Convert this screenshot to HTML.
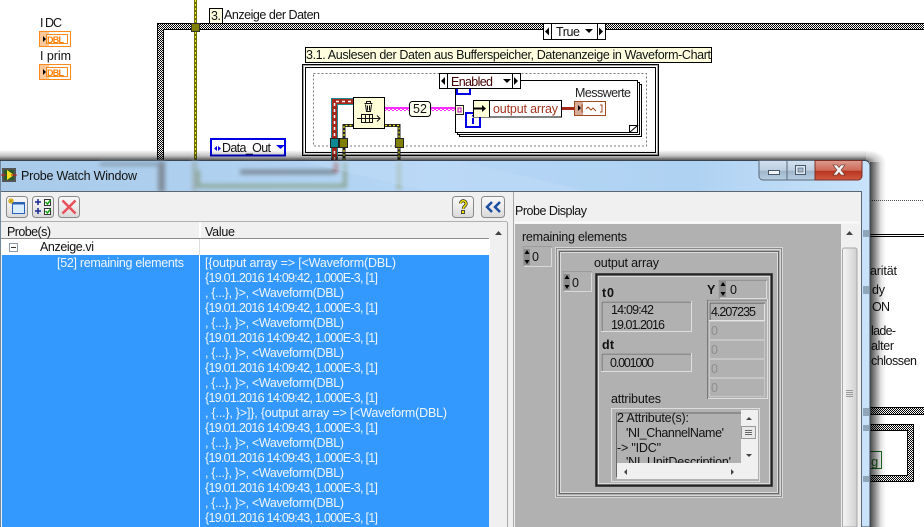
<!DOCTYPE html>
<html><head><meta charset="utf-8"><style>
html,body{margin:0;padding:0;background:#fff;width:924px;height:527px;overflow:hidden}
svg{display:block}
text{font-family:"Liberation Sans",sans-serif;font-size:12.5px;fill:#111}
.w text{fill:#f0f6ff}
</style></head><body>
<svg width="924" height="527" viewBox="0 0 924 527" xmlns="http://www.w3.org/2000/svg">
<defs>
<pattern id="n" width="2" height="2" patternUnits="userSpaceOnUse"><rect width="2" height="2" fill="#fff"/><rect width="1" height="1" fill="#000"/><rect x="1" y="1" width="1" height="1" fill="#000"/></pattern>
<pattern id="bw" width="5" height="6" patternUnits="userSpaceOnUse"><rect width="5" height="6" fill="#a5281a"/><rect y="2" width="5" height="2" fill="#fff"/></pattern>
<pattern id="ph" width="4" height="4" patternUnits="userSpaceOnUse"><rect width="4" height="4" fill="#ff30ff"/><rect x="0" y="1" width="2" height="1" fill="#fff"/><rect x="2" y="2" width="2" height="1" fill="#fff"/></pattern>
<filter id="b" x="-20%" y="-100%" width="140%" height="300%"><feGaussianBlur stdDeviation="2.2"/></filter>
<linearGradient id="btn" x1="0" y1="0" x2="0" y2="1"><stop offset="0" stop-color="#f8f8f8"/><stop offset=".5" stop-color="#ececec"/><stop offset="1" stop-color="#d8d8d8"/></linearGradient>
<linearGradient id="glass" x1="0" y1="0" x2="1" y2="0"><stop offset="0" stop-color="#a9cbe9"/><stop offset=".5" stop-color="#b5d6f5"/><stop offset=".8" stop-color="#b0d2f2"/><stop offset="1" stop-color="#c8e3fa"/></linearGradient>
<linearGradient id="cl" x1="0" y1="0" x2="0" y2="1"><stop offset="0" stop-color="#dc9c90"/><stop offset=".5" stop-color="#cf6a58"/><stop offset=".55" stop-color="#b83420"/><stop offset="1" stop-color="#d05a40"/></linearGradient>
<linearGradient id="mn" x1="0" y1="0" x2="0" y2="1"><stop offset="0" stop-color="#d4e2ef"/><stop offset=".5" stop-color="#bccfe0"/><stop offset=".55" stop-color="#a0b6ca"/><stop offset="1" stop-color="#b8cfe3"/></linearGradient>
<linearGradient id="sb" x1="0" y1="0" x2="1" y2="0"><stop offset="0" stop-color="#f4f4f4"/><stop offset=".5" stop-color="#e4e4e4"/><stop offset="1" stop-color="#cfcfcf"/></linearGradient>
<linearGradient id="shR" x1="0" y1="0" x2="1" y2="0"><stop offset="0" stop-color="#000" stop-opacity=".72"/><stop offset=".35" stop-color="#000" stop-opacity=".42"/><stop offset=".7" stop-color="#000" stop-opacity=".1"/><stop offset="1" stop-color="#000" stop-opacity="0"/></linearGradient>
<linearGradient id="shT" x1="0" y1="1" x2="0" y2="0"><stop offset="0" stop-color="#000" stop-opacity=".65"/><stop offset=".4" stop-color="#000" stop-opacity=".25"/><stop offset="1" stop-color="#000" stop-opacity="0"/></linearGradient>
<radialGradient id="shC" cx="0" cy="1" r="1"><stop offset="0" stop-color="#000" stop-opacity=".6"/><stop offset=".5" stop-color="#000" stop-opacity=".2"/><stop offset="1" stop-color="#000" stop-opacity="0"/></radialGradient>
</defs>

<!-- ===== diagram ===== -->
<text x="40" y="27" textLength="22">I DC</text>
<text x="40" y="60" textLength="31">I prim</text>
<g><rect x="39.500" y="31.500" width="31" height="15" fill="#fff" stroke="#ff8a1c"/><rect x="40" y="32" width="9" height="14" fill="#ffc89a"/><rect x="46.500" y="34.500" width="21" height="9" fill="#fff" stroke="#ff8a1c"/><path d="M43 36l3 3-3 3z" fill="#000"/><text x="47" y="43" style="font-size:9px;font-weight:bold;fill:#ff7d00" textLength="17">DBL</text></g>
<g transform="translate(0,33)"><rect x="39.500" y="31.500" width="31" height="15" fill="#fff" stroke="#ff8a1c"/><rect x="40" y="32" width="9" height="14" fill="#ffc89a"/><rect x="46.500" y="34.500" width="21" height="9" fill="#fff" stroke="#ff8a1c"/><path d="M43 36l3 3-3 3z" fill="#000"/><text x="47" y="43" style="font-size:9px;font-weight:bold;fill:#ff7d00" textLength="17">DBL</text></g>

<!-- case structure -->
<rect x="157" y="23" width="767" height="6" fill="url(#n)"/>
<rect x="157" y="23" width="6" height="137" fill="url(#n)"/>
<path d="M924 23.500H157.500V160M163.500 160V29.500H924" fill="none" stroke="#000"/>
<rect x="194" y="0" width="3" height="160" fill="#6e6e00"/>
<path d="M195.500 0V160" stroke="#f4f420" stroke-dasharray="2 2"/>
<rect x="191.500" y="23.500" width="8" height="8" fill="#808000" stroke="#333"/>
<rect x="209.500" y="8.500" width="13" height="15" fill="#ffffe0" stroke="#000"/>
<text x="211" y="20" textLength="10">3.</text>
<text x="224" y="19" textLength="96">Anzeige der Daten</text>

<rect x="543.500" y="23.500" width="62" height="16" fill="#fff" stroke="#000"/>
<path d="M551.500 24v15M597.500 24v15" stroke="#000"/>
<path d="M549 27.500l-4 4 4 4zM599 27.500l4 4-4 4z" fill="#000"/>
<text x="556" y="36" textLength="24">True</text>
<path d="M585 29h8l-4 4z" fill="#000"/>

<rect x="305.500" y="47.500" width="406" height="15" fill="#ffffe0" stroke="#000"/>
<text x="306" y="59" textLength="405">3.1. Auslesen der Daten aus Bufferspeicher, Datenanzeige in Waveform-Chart</text>

<!-- sequence frame -->
<rect x="302.500" y="64.500" width="356" height="91" fill="#fff" stroke="#000"/>
<rect x="303.500" y="65.500" width="354" height="89" fill="none" stroke="#aaa"/>
<rect x="305.500" y="67.500" width="350" height="85" fill="#fff" stroke="#000"/>
<rect x="313.500" y="73.500" width="333" height="72.500" fill="none" stroke="#777" stroke-dasharray="2 2"/>

<!-- wires -->
<path d="M331.500 160V98.500H353" fill="none" stroke="#1a8c94"/>
<path d="M337.500 160V104.500H353" fill="none" stroke="#1a8c94"/>
<path d="M334.500 160V101.500H353" fill="none" stroke="#a5281a" stroke-width="5"/>
<path d="M334.500 160V101.500H353" fill="none" stroke="#fff" stroke-width="1.500" stroke-dasharray="3 3"/>
<path d="M344 160V125.500H353M385 125.500H399V160" fill="none" stroke="#222" stroke-width="3"/>
<path d="M344 160V125.500H353M385 125.500H399V160" fill="none" stroke="#eaea20" stroke-width="1.200" stroke-dasharray="2 2"/>
<rect x="330.500" y="138.500" width="8" height="9" fill="#0a8a90" stroke="#222"/>
<rect x="339.500" y="138.500" width="8" height="9" fill="#808000" stroke="#222"/>
<rect x="395.500" y="138.500" width="8" height="9" fill="#808000" stroke="#222"/>
<rect x="385" y="107" width="24" height="4" fill="url(#ph)"/>
<rect x="431" y="107" width="24" height="4" fill="url(#ph)"/>
<rect x="464" y="107" width="10" height="4" fill="url(#ph)"/>

<!-- node -->
<rect x="353.500" y="97.500" width="31" height="31" fill="#ffffd8" stroke="#000"/>
<path d="M364.500 103.500h8M366.500 103.500v-2h4v2M365.500 104.500l1 7h4l1-7M367.500 105.500v5M369.500 105.500v5" fill="none" stroke="#111"/>
<path d="M357 118.500h4.500M361.500 114.500h11v8h-11zM365.500 114.500v8M369.500 114.500v8M361.500 118.500h11M372.500 118.500h7.500M377 115.500l3 3-3 3" fill="none" stroke="#111"/>
<rect x="409.500" y="101.500" width="21" height="15" rx="3" fill="#fffff0" stroke="#000"/>
<text x="413" y="113" textLength="14">52</text>

<!-- disable structure -->
<rect x="459.500" y="84.500" width="182" height="52" fill="#fff" stroke="#000"/>
<rect x="457.500" y="82.500" width="182" height="52" fill="#fff" stroke="#000"/>
<rect x="455.500" y="80.500" width="182" height="52" fill="#fff" stroke="#000"/>
<path d="M629.500 132.500V125.500H637.500L629.500 132.500" fill="#fff" stroke="#000"/>
<rect x="439.500" y="73.500" width="81" height="15" fill="#fff" stroke="#000"/>
<path d="M447.500 74v15M512.500 74v15" stroke="#000"/>
<path d="M445 77l-4 4 4 4zM514 77l4 4-4 4z" fill="#000"/>
<text x="451" y="86" textLength="42" style="fill:#400">Enabled</text>
<path d="M503 79h8l-4 4z" fill="#000"/>
<path d="M457 89v5h13v-5" fill="none" stroke="#0000e6" stroke-width="2"/>
<rect x="455.500" y="105.500" width="8" height="9" fill="#ffffd8" stroke="#222"/>
<rect x="458" y="108" width="3" height="4" fill="none" stroke="#c000c0"/>
<rect x="466" y="113" width="14" height="14" fill="#fff" stroke="#0000e6" stroke-width="2"/>
<rect x="472" y="118" width="2" height="6" fill="#0000e6"/><rect x="472" y="115" width="2" height="1.500" fill="#0000e6"/>
<rect x="473.500" y="100.500" width="88" height="16.500" fill="#fff" stroke="#000"/>
<rect x="474" y="101" width="15" height="16" fill="#ffffd8"/>
<path d="M489.500 100v17" stroke="#000"/>
<path d="M474 108.500h10" stroke="#000" stroke-width="2"/><path d="M482 105l4 3.500-4 3.500z" fill="#000"/>
<text x="493" y="113" textLength="65" style="fill:#a5341f">output array</text>
<rect x="562" y="107" width="13" height="4" fill="url(#bw)"/>
<text x="575" y="97" textLength="56" style="fill:#222">Messwerte</text>
<rect x="574.500" y="101.500" width="31" height="14" fill="#fff" stroke="#a04a20"/>
<rect x="575" y="102" width="8" height="13" fill="#d8aa98"/>
<path d="M578 105l3 3-3 3z" fill="#000"/>
<path d="M583 105h-1v7h1M586 109l2-2 3 3 2-2 3 3M600 105h2v7h-2" fill="none" stroke="#a04a20"/>

<!-- data out -->
<rect x="211" y="139" width="74" height="16.500" fill="#fff" stroke="#0000e6" stroke-width="2"/>
<path d="M217 146l-3 2.500 3 2.500zM218 146l3 2.500-3 2.500z" fill="#0000e6"/>
<text x="222" y="152" textLength="49">Data_Out</text>
<path d="M276 145h9l-4.500 4z" fill="#0000e6"/>

<!-- right of window -->
<path d="M870 200.500H924" stroke="#555" stroke-dasharray="1 1"/>
<rect x="870" y="234" width="54" height="1" fill="#000"/><rect x="870" y="236" width="54" height="1" fill="#000"/>
<text x="870" y="275" textLength="27">arität</text>
<text x="872" y="294" textLength="13">dy</text>
<text x="872" y="311" textLength="18">ON</text>
<text x="871" y="335" textLength="25">lade-</text>
<text x="871" y="350" textLength="23">alter</text>
<text x="871" y="365" textLength="46">chlossen</text>
<rect x="870" y="408" width="54" height="6" fill="url(#n)"/>
<path d="M870 407.500H924M870 414.500H924" stroke="#000"/>
<rect x="870" y="425" width="44" height="57" fill="url(#n)"/>
<rect x="870" y="431" width="38" height="45" fill="#fff"/>
<path d="M870 424.500H913.500V481.500H870M870 430.500H907.500V475.500H870" fill="none" stroke="#000"/>
<path d="M870 451.500H881.500V468.500H870" fill="none" stroke="#1c6b1c"/>
<text x="871" y="466" style="fill:#1c6b1c;font-size:13px">g</text>

<!-- ===== window ===== -->
<rect x="0" y="150" width="866" height="10" fill="url(#shT)"/>
<rect x="866" y="150" width="20" height="12" fill="url(#shC)"/>
<rect x="870" y="162" width="16" height="365" fill="url(#shR)"/>
<path d="M0 160.500H865a5 5 0 0 1 5 5V527H0z" fill="url(#glass)" stroke="#3a4450"/>
<g filter="url(#b)">
<rect x="158" y="161" width="7" height="31" fill="#7f8c9a"/>
<rect x="192" y="161" width="5" height="31" fill="#9db4bd"/>
<path d="M198 170V186H345V162" fill="none" stroke="#8ea89a" stroke-width="4"/>
<path d="M240 172H336" stroke="#7e8d9b" stroke-width="5"/>
<path d="M336 162v10" stroke="#a06060" stroke-width="4"/>
<path d="M399 162V190" stroke="#a3b8a8" stroke-width="4"/>
<rect x="100" y="162" width="60" height="4" fill="#88a0b5"/>
</g>
<path d="M300 161l130 31h160l-130-31z" fill="#c4e0f8" opacity=".35"/>
<g fill="#8fa6ba"><rect x="863" y="230" width="6" height="7"/><rect x="863" y="286" width="6" height="8"/><rect x="863" y="408" width="6" height="8"/><rect x="863" y="425" width="6" height="6"/><rect x="863" y="476" width="6" height="6"/></g>
<!-- window buttons -->
<path d="M759 160.500V176a4 4 0 0 0 4 4h24V160.500z" fill="url(#mn)" stroke="#5a6a7a"/>
<rect x="787" y="160.500" width="28" height="19.500" fill="url(#mn)" stroke="#5a6a7a"/>
<path d="M815 160.500V180h43a4 4 0 0 0 4-4V160.500z" fill="url(#cl)" stroke="#7a3028"/>
<rect x="768.500" y="170.500" width="11" height="4" fill="#f0f4f8" stroke="#46586a"/>
<rect x="795.500" y="165.500" width="10" height="9" fill="#dfe8f0" stroke="#46586a"/><rect x="798" y="168" width="5" height="4" fill="#a8bccd" stroke="#46586a" stroke-width=".6"/>
<path d="M833 165h4l2 2.500 2-2.500h4l-4 5 4 5h-4l-2-2.500-2 2.500h-4l4-5z" fill="#f4f4f4" stroke="#5a2a24" stroke-width=".6"/>
<!-- icon + title -->
<rect x="2" y="168" width="14" height="14" fill="#555"/><rect x="4" y="170" width="10" height="10" fill="#2a5a2a"/>
<path d="M7 170v10l7-5z" fill="#f4e020"/><path d="M1 175H6M11 175H17" stroke="#d01818"/>
<text x="21" y="180" textLength="116">Probe Watch Window</text>

<!-- content -->
<rect x="1" y="192" width="861" height="335" fill="#f0f0f0"/>
<path d="M1 191.500H862" stroke="#5c6670"/><path d="M861.500 192V527" stroke="#5c6670"/>
<g fill="url(#btn)" stroke="#8a8a8a">
<rect x="6.500" y="196.500" width="21" height="21" rx="3"/><rect x="32.500" y="196.500" width="21" height="21" rx="3"/><rect x="58.500" y="196.500" width="21" height="21" rx="3"/>
<rect x="452.500" y="196.500" width="21" height="21" rx="3"/><rect x="481.500" y="196.500" width="23" height="21" rx="3"/>
</g>
<rect x="12.500" y="202.500" width="12" height="11" fill="#d8ecff" stroke="#2a62b8"/><rect x="12" y="202" width="13" height="2.500" fill="#2a62b8"/>
<path d="M9 199l4 4M13 199l-4 4M11 198v6M8 201h6" stroke="#c8a000"/>
<path d="M35 202h6M38 199v6M35 211h6M38 208v6" stroke="#1a2a90" stroke-width="1.500"/>
<rect x="44.500" y="199.500" width="6" height="6" fill="#fff" stroke="#333"/><rect x="44.500" y="208.500" width="6" height="6" fill="#fff" stroke="#333"/>
<path d="M45.500 202l2 2 3-4M45.500 211l2 2 3-4" fill="none" stroke="#10a010" stroke-width="1.500"/>
<path d="M62.500 200.500l13 13M75.500 200.500l-13 13" stroke="#e8505a" stroke-width="2.500"/>
<path d="M460.500 203.500a2.800 2.800 0 1 1 4.800 2c-1.200 1-2 1.700-2 3.200" fill="none" stroke="#222" stroke-width="3"/>
<path d="M460.500 203.500a2.800 2.800 0 1 1 4.800 2c-1.200 1-2 1.700-2 3.200" fill="none" stroke="#f6e800" stroke-width="1.500"/>
<rect x="461.500" y="210.500" width="3" height="3" fill="#f6e800" stroke="#222" stroke-width=".8"/>
<path d="M492 202l-5 5 5 5M500 202l-5 5 5 5" fill="none" stroke="#1a4fa0" stroke-width="2.500"/>

<!-- left table -->
<rect x="1" y="222" width="489" height="16" fill="#f0f0f0"/>
<path d="M1 221.500H507" stroke="#b0b0b0"/>
<path d="M1 238.500H489" stroke="#8c8c8c"/>
<path d="M199.500 222V238M200.500 222V238" stroke="#fff"/>
<text x="7" y="236" textLength="44">Probe(s)</text>
<text x="205" y="236" textLength="30">Value</text>
<rect x="1" y="239" width="489" height="16" fill="#fff"/>
<rect x="199" y="239" width="1" height="16" fill="#ddd"/>
<rect x="9.500" y="243.500" width="8" height="8" fill="#fff" stroke="#8a9aaa"/><path d="M11 247.500h5" stroke="#333"/>
<text x="40" y="251" textLength="54">Anzeige.vi</text>
<rect x="2" y="255" width="487" height="272" fill="#3399ff"/>
<rect x="199" y="255" width="1" height="272" fill="#fff"/>
<path d="M507.500 222V527M513.500 192V527" stroke="#a8a8a8"/>
<path d="M495 235l3.500-4 3.500 4z" fill="#444"/>
<g class="w">
<text x="57" y="267" textLength="127">[52] remaining elements</text>
<text x="205" y="267" textLength="191">[{output array =&gt; [&lt;Waveform(DBL)</text>
<text x="205" y="282" textLength="173">{19.01.2016 14:09:42, 1.000E-3, [1]</text>
<text x="205" y="297" textLength="139">, {...}, }&gt;, &lt;Waveform(DBL)</text>
<text x="205" y="312" textLength="173">{19.01.2016 14:09:42, 1.000E-3, [1]</text>
<text x="205" y="327" textLength="139">, {...}, }&gt;, &lt;Waveform(DBL)</text>
<text x="205" y="342" textLength="173">{19.01.2016 14:09:42, 1.000E-3, [1]</text>
<text x="205" y="357" textLength="139">, {...}, }&gt;, &lt;Waveform(DBL)</text>
<text x="205" y="372" textLength="173">{19.01.2016 14:09:42, 1.000E-3, [1]</text>
<text x="205" y="387" textLength="139">, {...}, }&gt;, &lt;Waveform(DBL)</text>
<text x="205" y="402" textLength="173">{19.01.2016 14:09:42, 1.000E-3, [1]</text>
<text x="205" y="417" textLength="242">, {...}, }&gt;]}, {output array =&gt; [&lt;Waveform(DBL)</text>
<text x="205" y="432" textLength="173">{19.01.2016 14:09:43, 1.000E-3, [1]</text>
<text x="205" y="447" textLength="139">, {...}, }&gt;, &lt;Waveform(DBL)</text>
<text x="205" y="462" textLength="173">{19.01.2016 14:09:43, 1.000E-3, [1]</text>
<text x="205" y="477" textLength="139">, {...}, }&gt;, &lt;Waveform(DBL)</text>
<text x="205" y="492" textLength="173">{19.01.2016 14:09:43, 1.000E-3, [1]</text>
<text x="205" y="507" textLength="139">, {...}, }&gt;, &lt;Waveform(DBL)</text>
<text x="205" y="522" textLength="173">{19.01.2016 14:09:43, 1.000E-3, [1]</text>
</g>

<!-- right pane -->
<text x="515" y="215" textLength="72">Probe Display</text>
<rect x="515" y="224" width="326" height="303" fill="#b1b1b1"/>
<path d="M514 222.500H860" stroke="#fafafa" stroke-width="2"/>
<path d="M842.500 527V250a2 2 0 0 1 2-2H855a2 2 0 0 1 2 2V527z" fill="url(#sb)" stroke="#a8a8a8"/>
<path d="M853 235l-3.500-4-3.500 4z" fill="#444"/>
<path d="M846 390.500h7M846 392.500h7M846 394.500h7M846 396.500h7" stroke="#999"/>
<text x="522" y="241" textLength="105">remaining elements</text>

<!-- outer index -->
<rect x="522.500" y="247.500" width="29" height="19" fill="#b1b1b1" stroke="#d8d8d8"/>
<path d="M523 267v-20h29" fill="none" stroke="#888"/>
<rect x="524" y="249" width="6" height="16" fill="#8c8c8c"/>
<path d="M527 250l2.500 4h-5zM527 264l2.500-4h-5z" fill="#000"/>
<text x="532" y="261" textLength="7">0</text>

<!-- outer cluster -->
<g fill="none">
<rect x="555.500" y="247.500" width="227" height="250" stroke="#d6d6d6"/>
<rect x="556.500" y="248.500" width="225" height="248" stroke="#8a8a8a"/>
<rect x="557.500" y="249.500" width="223" height="246" stroke="#d6d6d6"/>
<rect x="559.500" y="251.500" width="219" height="242" stroke="#666"/>
<rect x="560.500" y="252.500" width="217" height="240" stroke="#dcdcdc"/>
</g>
<text x="594" y="267" textLength="65">output array</text>

<!-- inner index -->
<rect x="562.500" y="272.500" width="29" height="19" fill="#b1b1b1" stroke="#d8d8d8"/>
<path d="M563 292v-20h29" fill="none" stroke="#888"/>
<rect x="564" y="274" width="6" height="16" fill="#8c8c8c"/>
<path d="M567 275l2.500 4h-5zM567 289l2.500-4h-5z" fill="#000"/>
<text x="572" y="287" textLength="7">0</text>

<!-- inner cluster -->
<rect x="595.500" y="273.500" width="177" height="213" fill="#b1b1b1" stroke="#666"/>
<rect x="596.500" y="274.500" width="175" height="211" fill="none" stroke="#222" stroke-width="2"/>
<rect x="598.500" y="276.500" width="171" height="207" fill="none" stroke="#dcdcdc"/>

<text x="602" y="297" style="font-weight:bold" textLength="12">t0</text>
<rect x="601.500" y="301.500" width="90" height="30" fill="#b1b1b1" stroke="#dedede"/>
<path d="M602 331V302H691" fill="none" stroke="#666"/>
<text x="611" y="314" textLength="43">14:09:42</text>
<text x="611" y="329" textLength="54">19.01.2016</text>
<text x="602" y="349" style="font-weight:bold" textLength="12">dt</text>
<rect x="601.500" y="353.500" width="90" height="18" fill="#b1b1b1" stroke="#dedede"/>
<path d="M602 371V354H691" fill="none" stroke="#666"/>
<text x="610" y="367" textLength="44">0.001000</text>

<text x="707" y="294" style="font-weight:bold">Y</text>
<rect x="718.500" y="279.500" width="48" height="19" fill="#b1b1b1" stroke="#dedede"/>
<path d="M719 299V280H767" fill="none" stroke="#777"/>
<rect x="720" y="281" width="6" height="16" fill="#8c8c8c"/>
<path d="M723 282l2.500 4h-5zM723 296l2.500-4h-5z" fill="#000"/>
<text x="730" y="294" textLength="7">0</text>

<rect x="707.500" y="299.500" width="60" height="99" fill="none" stroke="#dedede"/>
<path d="M707.500 399V300H767" fill="none" stroke="#777"/>
<rect x="709.500" y="302.500" width="55" height="18" fill="#b1b1b1" stroke="#e4e4e4"/><path d="M710 320V303H765" fill="none" stroke="#555"/>
<g fill="none" stroke="#c6c6c6"><rect x="709.500" y="321.500" width="55" height="18"/><rect x="709.500" y="340.500" width="55" height="18"/><rect x="709.500" y="359.500" width="55" height="18"/><rect x="709.500" y="378.500" width="55" height="18"/></g>
<text x="711" y="316" textLength="45">4.207235</text>
<text x="711" y="335" style="fill:#8e8e8e">0</text><text x="711" y="354" style="fill:#8e8e8e">0</text><text x="711" y="373" style="fill:#8e8e8e">0</text><text x="711" y="392" style="fill:#8e8e8e">0</text>

<text x="611" y="403" textLength="50">attributes</text>
<rect x="611.500" y="408.500" width="148" height="73" fill="#b1b1b1" stroke="#dedede"/>
<path d="M616.500 477V413H757" fill="none" stroke="#666"/>
<rect x="741" y="410" width="17" height="53" fill="#f0f0f0"/>
<rect x="617" y="463" width="141" height="16" fill="#f0f0f0"/>
<rect x="741.500" y="426.500" width="14" height="12" fill="#e8e8e8" stroke="#999"/>
<path d="M745 430.500h7M745 432.500h7M745 434.500h7" stroke="#666"/>
<path d="M746 420l3-3 3 3zM746 454l3 3 3-3zM627 469l-3 3 3 3zM731 469l3 3-3 3z" fill="#444"/>
<clipPath id="c"><rect x="617" y="411" width="124" height="52"/></clipPath>
<g clip-path="url(#c)">
<text x="617" y="422" textLength="72">2 Attribute(s):</text>
<text x="626" y="437" textLength="98">'NI_ChannelName'</text>
<text x="617" y="452" textLength="44">-&gt; "IDC"</text>
<text x="626" y="466" textLength="105">'NI_UnitDescription'</text>
</g>
</svg>
</body></html>
